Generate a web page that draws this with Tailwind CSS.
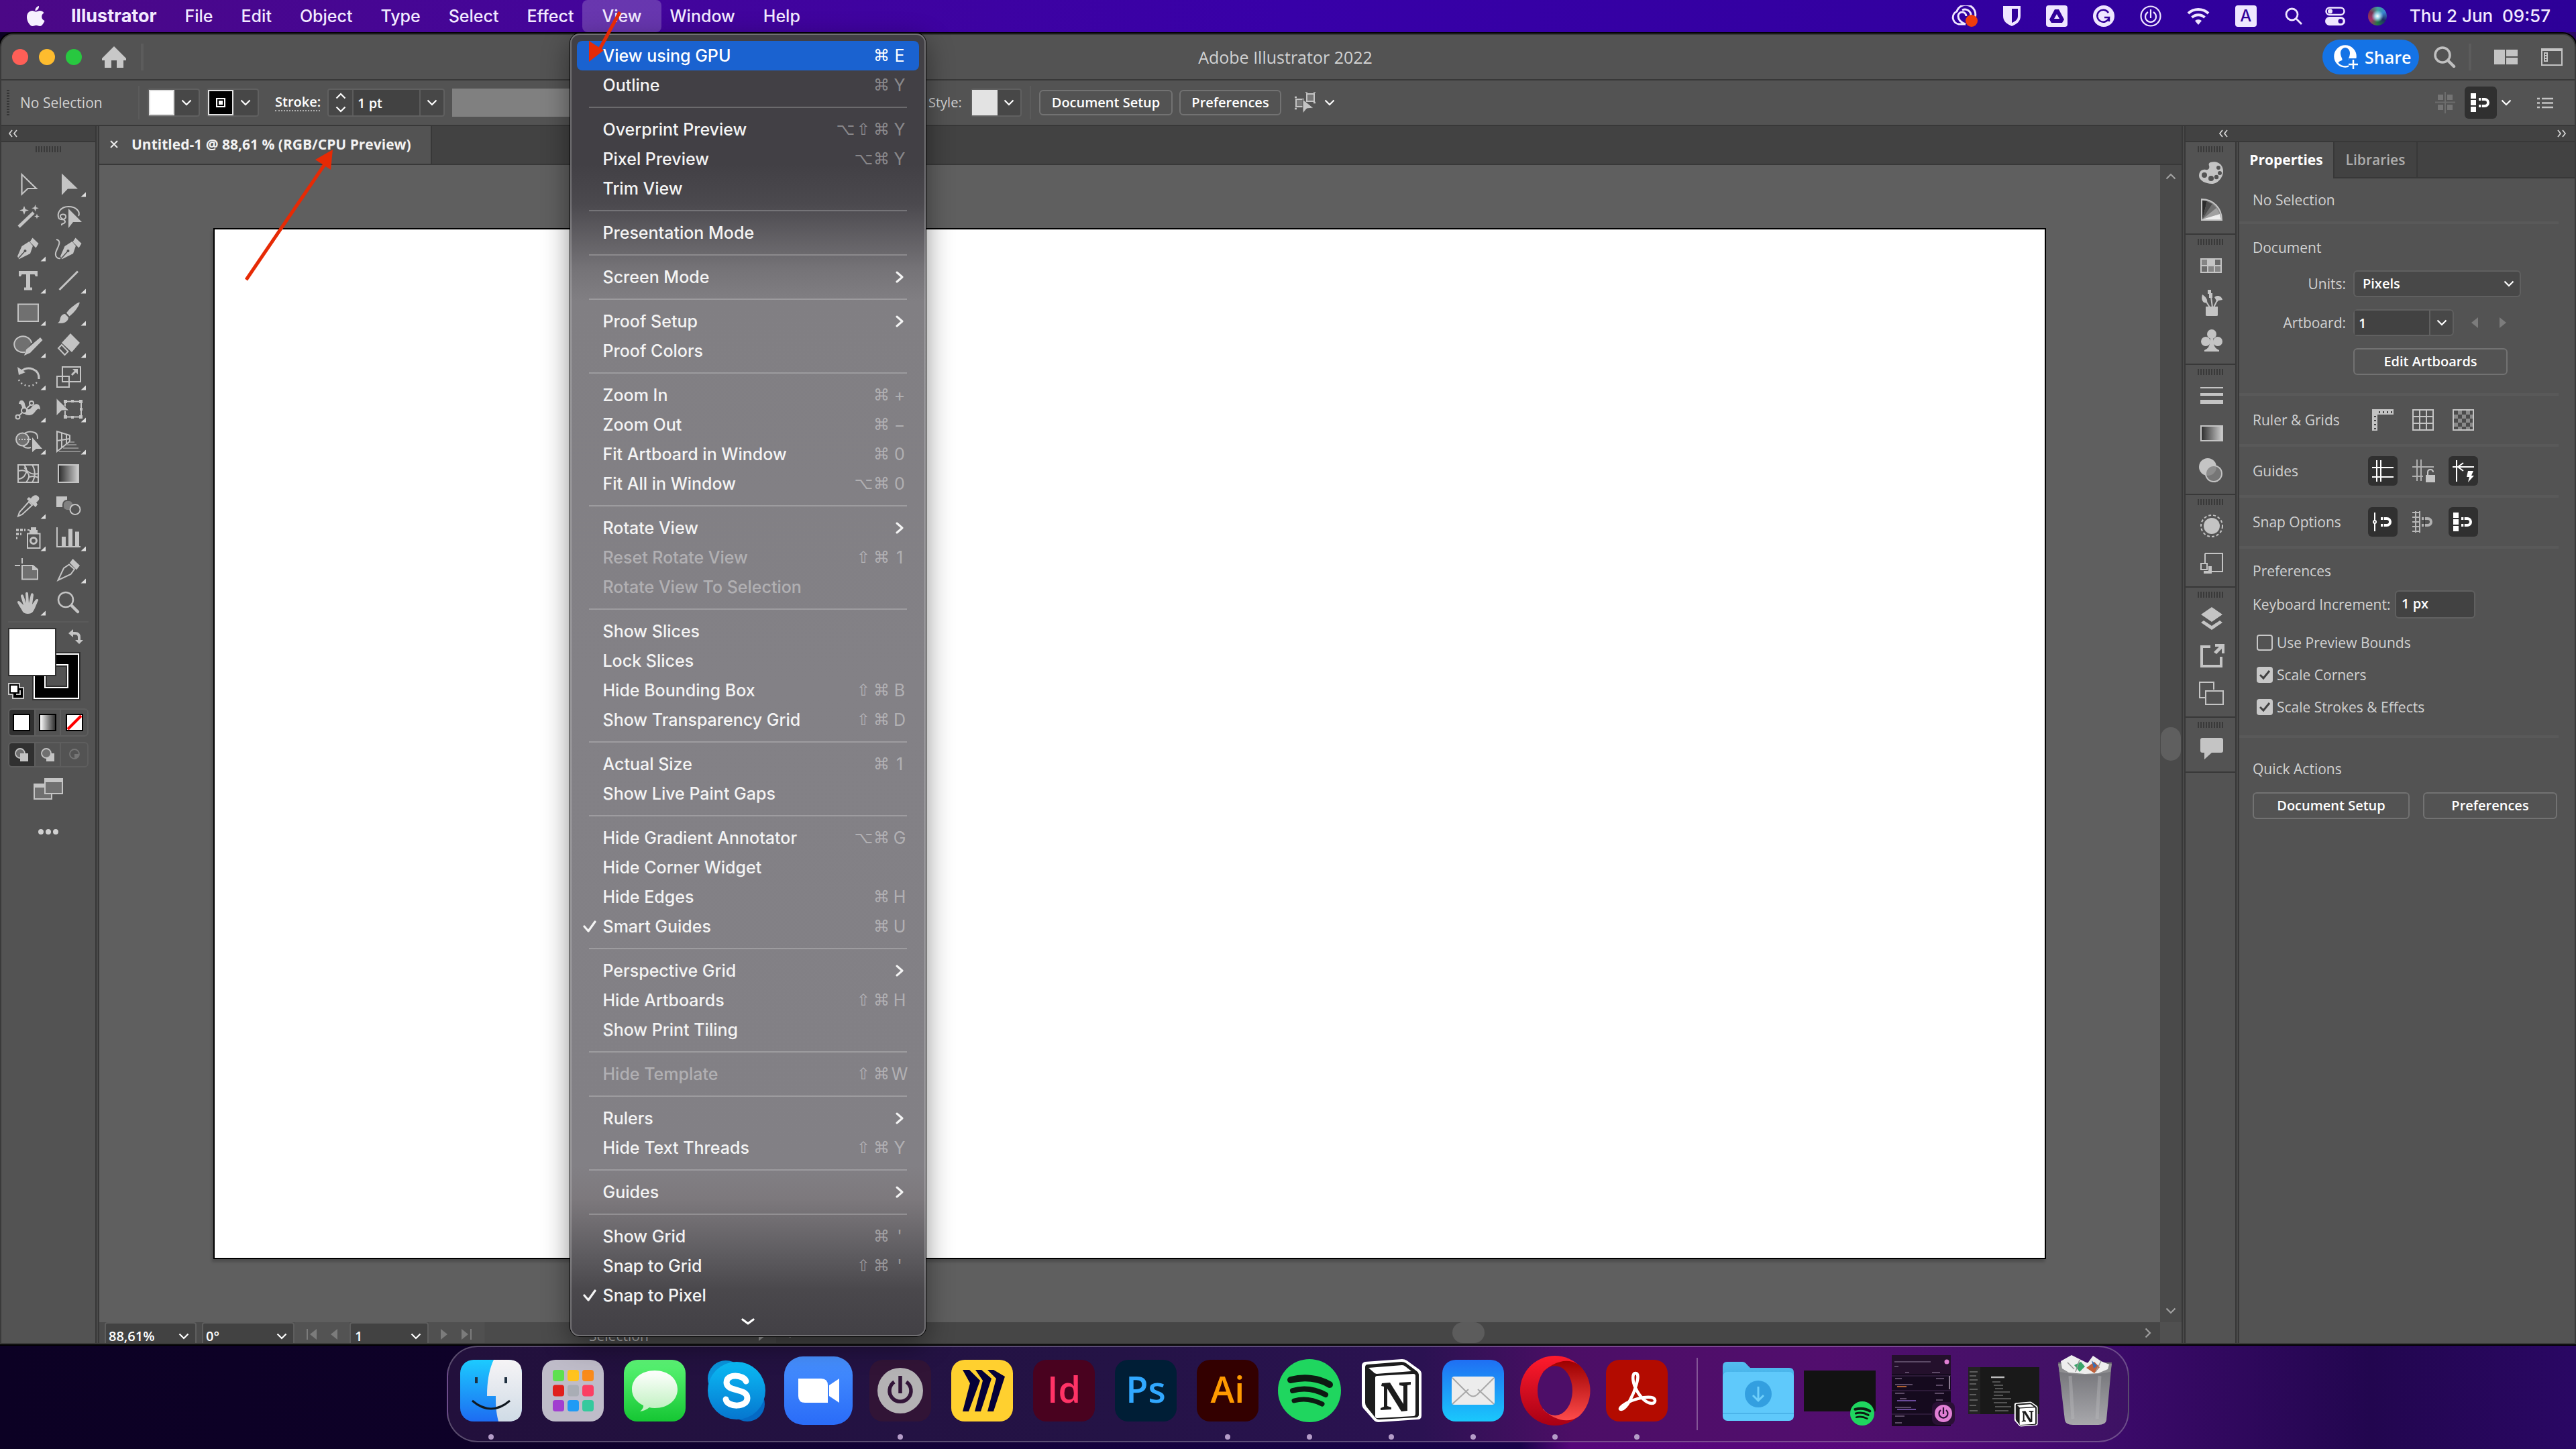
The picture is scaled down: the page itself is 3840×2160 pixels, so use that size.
<!DOCTYPE html>
<html lang="en">
<head>
<meta charset="utf-8">
<title>Adobe Illustrator 2022</title>
<script src="https://cdn.jsdelivr.net/npm/@tailwindcss/browser@4"></script>
</head>
<body class="relative flex min-h-screen flex-col overflow-x-hidden bg-[linear-gradient(90deg,#0c0124_0%,#0e0128_18%,#14023a_38%,#19034a_59%,#56067a_61%,#58087c_74%,#3c0a6a_82%,#22064f_92%,#2a0764_100%)] font-['Open_Sans','Noto_Sans',sans-serif] text-[20px] leading-7 font-medium text-[#d2d2d2]">

<svg class="hidden" aria-hidden="true">
  <symbol id="chev" viewBox="0 0 16 10"><path d="M1.500 1.500 8 8l6.500-6.500" fill="none" stroke="currentColor" stroke-width="2.200"/></symbol>
  <symbol id="grip" viewBox="0 0 38 9"><path d="M1 0v9M5 0v9M9 0v9M13 0v9M17 0v9M21 0v9M25 0v9M29 0v9M33 0v9M37 0v9" stroke="#393939" stroke-width="2"/></symbol>
  <symbol id="dbl" viewBox="0 0 14 12"><path d="M6 1 2 6l4 5M13 1 9 6l4 5" fill="none" stroke="currentColor" stroke-width="1.800"/></symbol>
  <symbol id="magnet" viewBox="0 0 18 16"><path d="M0 3h9a5 5 0 0 1 0 10H0" fill="none" stroke="currentColor" stroke-width="4"/><path d="M4 0v16" stroke="#303030" stroke-width="1.500"/></symbol>
  <symbol id="spot" viewBox="0 0 94 94"><circle cx="47" cy="47" r="47" fill="#1fd65f"/><g fill="none" stroke="#0d1a12" stroke-linecap="round"><path d="M19 31c20-5 42-3 58 7" stroke-width="10"/><path d="M22 47c17-5 34-2 49 6" stroke-width="8"/><path d="M24 62c14-4 28-2 42 5" stroke-width="7"/></g></symbol>
  <symbol id="notion" viewBox="0 0 92 96"><path d="M2 11q0-5 5-6L62 1q4 0 7 2l18 13q4 3 4 7v62q0 6-6 6l-58 4q-5 0-8-4L4 74q-2-3-2-7z" fill="#fff"/><path d="M7 13q0-4 4-4l50-4q4 0 7 2l16 12q3 2 3 5v60q0 3-4 4l-55 3q-4 0-6-3L9 72q-2-3-2-6z" fill="#1c1c1c"/><path d="m12 14 50-4q3 0 5 2l9 7-52 4q-3 0-5-3z" fill="#fff"/><path d="M22 29q0-3 3-3l54-3q3 0 3 3v56q0 4-3 4l-54 3q-3 0-3-3z" fill="#fff"/><path d="m32 37 12-1 20 32V41l-6-1v-4l17-1v4l-5 1v38l-9 1-21-34v26l6 2v3l-16 1v-3l5-2V42l-4-1z" fill="#1c1c1c"/></symbol>
</svg>

<!-- system menu bar -->
<header class="relative z-20 flex h-12 items-center bg-[linear-gradient(90deg,#4b0886_0%,#44059a_22%,#3800a8_50%,#2d0098_100%)] pr-[38px] pl-10 font-['Inter',sans-serif] text-[25px] leading-8 font-medium text-[#f2eaff]">
  <svg class="h-8 w-[27px]" viewBox="0 0 27 32" fill="#f6f0ff"><path d="M18 1c.5 3.500-2.500 7-5.500 7C12 4.500 15 1.500 18 1z"/><path d="M13.500 9.500c2 0 3.500-1.500 6-1.500 2.300 0 4.600 1.200 6 3.200-5 3-4 9.800 1 11.800-1.300 3.600-4 8-6.800 8-2.200 0-3-1.300-5.700-1.300S10.500 31 8.500 31C4.500 31 0 23.500 0 17.500S4 8 8 8c2.300 0 4 1.500 5.500 1.500z"/></svg>
  <nav class="ml-[39px] flex items-center gap-[42px]" aria-label="Menu bar">
    <button class="text-[27px] font-bold">Illustrator</button>
    <button>File</button>
    <button>Edit</button>
    <button>Object</button>
    <button>Type</button>
    <button>Select</button>
    <button>Effect</button>
    <div class="relative -mx-[29px]">
      <button class="flex h-12 items-center rounded-lg bg-white/20 px-[29px]" aria-expanded="true">View</button>
      <div id="menu" role="menu" class="absolute top-[50px] -left-[18px] w-[530px] rounded-[14px] border-2 border-white/25 bg-[linear-gradient(180deg,#424045_0%,#424045_10%,#4b494e_13%,#757377_18%,#817f83_20.500%,#838186_50%,#828085_87%,#7d797d_89.500%,#5e5c60_93.800%,#4a484c_96.500%,#424045_100%)] px-2 pt-[9px] pb-[3px] text-[25px] text-[#f4f4f4] shadow-[0_0_0_1px_#000,0_12px_40px_rgba(0,0,0,0.45)]"></div>
    </div>
    <button>Window</button>
    <button>Help</button>
  </nav>
  <div class="ml-auto flex items-center gap-[42px]">
    <div class="flex items-center gap-[38px]">
      <svg class="h-8 w-10" viewBox="0 0 40 32"><g fill="none" stroke="#efe6ff" stroke-width="3"><path d="M22 28H12A10 10 0 0 1 9 9 12 12 0 0 1 36 18"/><path d="M22 28c-8-3-11-8-11-12a6 6 0 0 1 12 0M17 7a9 9 0 0 1 13 9"/></g><circle cx="31" cy="23" r="9" fill="#f03c0c"/></svg>
      <svg class="h-[30px] w-[26px]" viewBox="0 0 26 30"><path d="M0 0h26v15c0 8-6 12-13 15C6 27 0 23 0 15z" fill="#efe6ff"/><path d="M13 4h9v11c0 5-4 8-9 10z" fill="#310099"/></svg>
      <svg class="size-8" viewBox="0 0 32 32"><rect width="32" height="32" rx="4" fill="#efe6ff"/><path d="M13 6h6l8 15-3 5H8l-3-5zM16 13l-4 7h8z" fill="#310099" fill-rule="evenodd"/></svg>
      <svg class="size-8" viewBox="0 0 32 32"><circle cx="16" cy="16" r="16" fill="#efe6ff"/><path d="M23 11a9 9 0 1 0 1 7h-7M24 18v6" fill="none" stroke="#310099" stroke-width="2.500"/></svg>
      <svg class="size-8" viewBox="0 0 32 32" fill="none" stroke="#efe6ff" stroke-width="2.200"><circle cx="16" cy="16" r="14.500"/><path d="M12 10a8 8 0 1 0 8 0M16 6v13"/></svg>
      <svg class="h-7 w-[34px]" viewBox="0 0 34 28" fill="none" stroke="#efe6ff" stroke-width="4"><path d="M2 10a22 22 0 0 1 30 0M7.500 16a14 14 0 0 1 19 0"/><path d="m17 27-5-6a8 8 0 0 1 10 0z" fill="#efe6ff" stroke="none"/></svg>
      <span class="grid size-8 place-items-center rounded bg-[#efe6ff] text-[24px] text-[#310099]">A</span>
    </div>
    <div class="flex items-center gap-[34px]">
      <svg class="h-[26px] w-[26px]" viewBox="0 0 26 26" fill="none" stroke="#efe6ff" stroke-width="2.800"><circle cx="10.500" cy="10.500" r="8.500"/><path d="m17 17 8 8"/></svg>
      <svg class="h-7 w-[30px]" viewBox="0 0 30 28"><rect x="1.500" y="1.500" width="27" height="10.500" rx="5.200" fill="none" stroke="#efe6ff" stroke-width="2.500"/><circle cx="7.500" cy="6.700" r="3.500" fill="#efe6ff"/><rect y="15" width="30" height="13" rx="6.500" fill="#efe6ff"/><circle cx="23" cy="21.500" r="3.500" fill="#310099"/></svg>
      <span class="size-7 rounded-full bg-[radial-gradient(circle_at_50%_50%,#fff_0%,#9fd4e8_18%,transparent_45%),conic-gradient(#3fa39a,#3b82d0,#1c2a66,#274,#a83268,#7a2f50,#3fa39a)]"></span>
      <time class="text-[26px] whitespace-pre">Thu 2 Jun  09:57</time>
    </div>
  </div>
</header>

<!-- application window -->
<main class="relative mt-0.5 flex flex-1 flex-col overflow-hidden rounded-t-[20px] border-2 border-[#3a3a3a] bg-[#535353] shadow-[0_0_0_2px_#000]">
  <div class="relative flex h-[68px] shrink-0 items-center justify-between border-b-2 border-[#383838] pr-[18px] pl-4">
    <div class="flex items-center">
      <div class="flex gap-4">
        <button aria-label="Close" class="size-6 rounded-full bg-[#ff5f57]"></button>
        <button aria-label="Minimise" class="size-6 rounded-full bg-[#febc2e]"></button>
        <button aria-label="Zoom window" class="size-6 rounded-full bg-[#28c840]"></button>
      </div>
      <button aria-label="Home" class="ml-[30px]"><svg class="h-8 w-9" viewBox="0 0 36 32" fill="#c8c8c8"><path d="M18 0 36 18v3h-4v11H22V21h-8v11H4V21H0v-3z"/></svg></button>
      <span class="ml-[22px] h-10 w-1 bg-[#5c5c5c]"></span>
    </div>
    <h1 class="pointer-events-none absolute inset-x-0 pr-2 text-center text-[25px] leading-8 font-medium">Adobe Illustrator 2022</h1>
    <div class="flex items-center">
      <button class="flex h-[52px] w-36 items-center gap-2.5 rounded-full bg-[#1473e6] pl-[17px] text-[25px] font-semibold text-white"><svg class="size-9" viewBox="0 0 36 36"><circle cx="17" cy="17" r="15.500" fill="none" stroke="#fff" stroke-width="2.500"/><path d="M17 2a15 15 0 0 0-11 26c1-4 4-4 6-5 2-2-2-5-2-11 0-4 3-8 7-8s7 4 7 8c0 6-3 8-2 11l3 1 7-5A15 15 0 0 0 17 2z" fill="#fff"/><path d="M22 20h14v16H22z" fill="#1473e6"/><path d="M29 22v14M22 29h14" stroke="#fff" stroke-width="2.500"/></svg>Share</button>
      <button aria-label="Search" class="ml-[21px]"><svg class="h-8 w-[34px]" viewBox="0 0 34 32" fill="none" stroke="#c0c0c0"><circle cx="14" cy="13" r="11" stroke-width="3.500"/><path d="m22 21 9 9" stroke-width="4.500" stroke-linecap="round"/></svg></button>
      <span class="ml-[19px] h-10 w-1 bg-[#5c5c5c]"></span>
      <button aria-label="Arrange documents" class="ml-[34px]"><svg class="h-[22px] w-[35px]" viewBox="0 0 35 22" fill="#c4c4c4"><path d="M0 0h16v22H0zM18 0h17v10H18zM18 12h17v10H18z"/></svg></button>
      <button aria-label="Switch workspace" class="ml-[35px]"><svg class="h-[26px] w-8" viewBox="0 0 32 26"><path d="M1 1h30v24H1z" fill="none" stroke="#c4c4c4" stroke-width="2"/><path d="M0 0h32v4H0z" fill="#c4c4c4"/><path d="M4 6h6v14H4z" fill="#c4c4c4"/><path d="M6 9h2M6 13h2M6 17h2" stroke="#444" stroke-width="2"/></svg></button>
    </div>
  </div>

  <!-- control bar -->
  <div class="flex h-[68px] shrink-0 items-center border-b-2 border-[#383838] pr-8 pl-2">
    <svg class="h-[38px] w-1" viewBox="0 0 4 38"><path d="M2 0v38" stroke="#353535" stroke-width="4" stroke-dasharray="2 2"/></svg>
    <span class="ml-4 w-[176px] text-[21px]">No Selection</span>
    <span class="h-[50px] w-0.5 bg-[#5b5b5b]"></span>
    <button aria-label="Fill" class="ml-3 flex h-[42px] w-[78px] items-center rounded border-2 border-[#606060] bg-[#474747] text-white"><span class="h-full w-[38px] border-2 border-[#e0e0e0] bg-white"></span><svg class="mx-auto h-2.5 w-4"><use href="#chev"/></svg></button>
    <button aria-label="Stroke colour" class="ml-2.5 flex h-[42px] w-[78px] items-center rounded border-2 border-[#606060] bg-[#474747] text-white"><span class="grid h-full w-[38px] place-items-center border-2 border-[#e0e0e0] bg-black"><span class="grid size-3.5 place-items-center border-2 border-white"><span class="size-1.5 bg-white"></span></span></span><svg class="mx-auto h-2.5 w-4"><use href="#chev"/></svg></button>
    <label for="stroke" class="ml-6 w-[67px] border-b-2 border-dotted border-[#b0b0b0] leading-6 font-semibold text-white">Stroke:</label>
    <div class="ml-[11px] flex h-[42px] w-[175px] items-center rounded border-2 border-[#606060] bg-[#474747] text-white">
      <div class="flex w-[35px] flex-col items-center gap-2.5"><svg class="h-2.5 w-4 rotate-180"><use href="#chev"/></svg><svg class="h-2.5 w-4"><use href="#chev"/></svg></div>
      <input id="stroke" value="1 pt" class="h-full w-[102px] border-x-2 border-[#5c5c5c] bg-[#424242] px-1.5 font-semibold">
      <svg class="mx-auto h-2.5 w-4"><use href="#chev"/></svg>
    </div>
    <span class="ml-[11px] h-[42px] w-[700px] bg-[#808080]"></span>
    <span class="ml-2.5 w-[51px]">Style:</span>
    <button aria-label="Graphic style" class="ml-3 flex h-[42px] w-[76px] items-center rounded border-2 border-[#606060] bg-[#474747] text-white"><span class="h-full w-[38px] bg-[#e3e3e3]"></span><svg class="mx-auto h-2.5 w-4"><use href="#chev"/></svg></button>
    <span class="ml-3 h-[50px] w-0.5 bg-[#5b5b5b]"></span>
    <button class="ml-3 h-[38px] w-[199px] rounded-md border-2 border-[#727272] font-semibold text-white">Document Setup</button>
    <button class="ml-2.5 h-[38px] w-[152px] rounded-md border-2 border-[#727272] font-semibold text-white">Preferences</button>
    <button aria-label="Select similar" class="ml-5 flex items-center gap-3"><svg class="size-8" viewBox="0 0 32 32"><path d="M2 11h11v11H2zM18 3h11v11H18z" fill="#777" stroke="#c4c4c4" stroke-width="2"/><path d="M0 8h3M0 25h3M16 0h3M28 0h3M28 16h3" stroke="#c4c4c4" stroke-width="2.500"/><path d="m12 11 16 13-10 1-6 7z" fill="#c4c4c4" stroke="#535353"/></svg><svg class="h-2.5 w-4 text-white"><use href="#chev"/></svg></button>
    <div class="ml-auto flex items-center">
      <svg class="h-8 w-[30px]" viewBox="0 0 30 32"><path d="M4 4h8v8H4zM18 4h8v8h-8zM4 19h8v8H4zM18 19h8v8h-8z" fill="#747474"/><path d="M15 0v32M0 15.500h30" stroke="#6c6c6c" stroke-width="2"/></svg>
      <button aria-label="Snap to pixel" class="ml-3.5 flex size-12 items-center justify-center gap-1 rounded-md bg-[#303030] text-white"><svg class="h-7 w-2" viewBox="0 0 8 28" fill="#fff"><path d="M0 0h8v8H0zM0 10h8v8H0zM0 20h8v8H0z"/></svg><svg class="h-4 w-[18px]"><use href="#magnet"/></svg></button>
      <svg class="ml-1.5 h-2.5 w-4 text-white"><use href="#chev"/></svg>
      <svg class="ml-[38px] h-[17px] w-6" viewBox="0 0 24 17"><path d="M0 2h4M7 2h17M0 8.500h4M7 8.500h17M0 15h4M7 15h17" stroke="#c4c4c4" stroke-width="2.500"/></svg>
    </div>
  </div>

  <div class="flex min-h-0 flex-1">
    <!-- tools -->
    <aside class="w-[140px] shrink-0">
      <div class="flex h-6 items-center border-b-2 border-[#383838] bg-[#424242] pl-2.5"><svg class="h-3 w-3.5"><use href="#dbl"/></svg></div>
      <svg class="mx-auto mt-1.5 h-[9px] w-[38px]"><use href="#grip"/></svg>
      <div id="tools" class="mt-[23px] grid grid-cols-[60px_60px] justify-center"></div>
      <div class="mx-2.5 mt-1 border-b-2 border-[#5a5a5a]"></div>
      <svg class="mx-2.5 mt-2 h-[108px] w-[120px]" viewBox="0 0 120 108">
        <path d="M36 36h72v72H36z" fill="#303030"/><path d="M38 38h68v68H38z" fill="#fff"/><path d="M40 40h64v64H40z" fill="#000"/><path d="M54 54h36v36H54z" fill="#fff"/><path d="M56 56h32v32H56z" fill="#303030"/><path d="M58 58h28v28H58z" fill="#535353"/>
        <path d="M0 0h72v72H0z" fill="#303030"/><path d="M2 2h68v68H2z" fill="#fff"/>
        <path d="M94 8h6q6 0 6 6v5" fill="none" stroke="#c4c4c4" stroke-width="4"/><path d="m90 8 7-6v12zM106 24l-6-6h12z" fill="#c4c4c4"/>
        <path d="M0 82h18v6h6v18H6v-6H0z" fill="#c4c4c4"/><path d="M8 90h14v14H8z"/><path d="M2 84h14v14H2z"/><path d="M4 86h10v10H4z" fill="#fff"/><path d="M12 99h6v-6" fill="none" stroke="#c4c4c4" stroke-width="2"/>
      </svg>
      <div class="mx-2.5 mt-3 grid h-[42px] w-[120px] grid-cols-3 divide-x-2 divide-[#5e5e5e] overflow-hidden rounded-md border-2 border-[#5e5e5e]">
        <button aria-label="Color" class="grid place-items-center bg-[#303030]"><span class="size-[26px] border-2 border-black bg-white"></span></button>
        <button aria-label="Gradient fill" class="grid place-items-center"><span class="size-[26px] border-2 border-black bg-linear-to-r from-white to-[#333]"></span></button>
        <button aria-label="None" class="grid place-items-center"><svg class="size-[26px]" viewBox="0 0 26 26"><path d="M1 1h24v24H1z" fill="#fff" stroke="#000" stroke-width="2"/><path d="M3 23 23 3" stroke="#f00" stroke-width="4"/></svg></button>
      </div>
      <div class="mx-2.5 mt-2 grid h-[38px] w-[120px] grid-cols-3 divide-x-2 divide-[#5e5e5e] overflow-hidden rounded-md border-2 border-[#5e5e5e]">
        <button aria-label="Draw normal" class="grid place-items-center bg-[#303030]"><svg class="size-5" viewBox="0 0 20 20"><circle cx="8" cy="8" r="7" fill="#707070" stroke="#c4c4c4" stroke-width="1.800"/><path d="M8 8h12v12H8z" fill="#c4c4c4"/></svg></button>
        <button aria-label="Draw behind" class="grid place-items-center"><svg class="size-5" viewBox="0 0 20 20"><path d="M8 8h12v12H8z" fill="#c4c4c4"/><circle cx="8" cy="8" r="7" fill="#707070" stroke="#c4c4c4" stroke-width="1.800"/></svg></button>
        <button aria-label="Draw inside" class="grid place-items-center"><svg class="size-5" viewBox="0 0 20 20"><circle cx="10" cy="9" r="7" fill="none" stroke="#757575" stroke-width="1.800"/><path d="M10 9h7q0 7-7 7z" fill="#757575"/></svg></button>
      </div>
      <button aria-label="Change screen mode" class="mx-auto mt-4 block w-11"><svg class="h-8 w-11" viewBox="0 0 44 32"><path d="M1 9h26v22H1z" fill="#707070" stroke="#c4c4c4" stroke-width="2"/><path d="M0 8h28v6H0z" fill="#c4c4c4"/><path d="M17 1h26v22H17z" fill="#707070" stroke="#c4c4c4" stroke-width="2"/><path d="M16 0h28v6H16z" fill="#c4c4c4"/></svg></button>
      <button aria-label="Edit toolbar" class="mx-auto mt-11 block w-[30px]"><svg class="h-2 w-[30px]" viewBox="0 0 30 8" fill="#d0d0d0"><circle cx="4" cy="4" r="4"/><circle cx="15" cy="4" r="4"/><circle cx="26" cy="4" r="4"/></svg></button>
    </aside>
    <div class="w-1.5 shrink-0 border-x-2 border-[#383838] bg-[#4a4a4a]"></div>

    <!-- document -->
    <section class="flex min-w-0 flex-1 flex-col">
      <div class="flex h-[58px] shrink-0 border-b-2 border-[#383838] bg-[#424242]">
        <div class="flex w-[496px] items-center gap-5 border-r-2 border-[#383838] bg-[#535353] pb-0.5 pl-4 text-[21px] font-bold text-[#f2f2f2]"><button aria-label="Close tab"><svg class="size-3" viewBox="0 0 12 12"><path d="m1 1 10 10M11 1 1 11" stroke="#eee" stroke-width="2"/></svg></button><span class="whitespace-nowrap">Untitled-1 @ 88,61 % (RGB/CPU Preview)</span></div>
      </div>
      <div class="flex min-h-0 flex-1">
        <div class="flex flex-1 bg-[#5f5f5f] px-[170px] py-[94px]"><div class="flex-1 border-2 border-black bg-white shadow-[-2px_4px_4px_rgba(0,0,0,0.2)]"></div></div>
        <div class="flex w-8 flex-col items-center justify-between bg-[#4a4a4a] py-3 text-[#a0a0a0]"><svg class="h-2.5 w-4 rotate-180"><use href="#chev"/></svg><span class="h-[50px] w-[30px] rounded-2xl bg-[#5f5f5f]"></span><svg class="h-2.5 w-4"><use href="#chev"/></svg></div>
      </div>
      <div class="flex h-[31px] shrink-0 overflow-hidden bg-[#4b4b4b] pl-2 font-semibold text-white">
        <div class="flex w-[137px] items-center rounded-t border-2 border-b-0 border-[#5e5e5e] bg-[#424242] pt-2"><input aria-label="Zoom level" value="88,61%" class="w-[99px] pl-1"><svg class="mx-auto h-2.5 w-4"><use href="#chev"/></svg></div>
        <div class="ml-2 flex w-[138px] items-center rounded-t border-2 border-b-0 border-[#5e5e5e] bg-[#424242] pt-2"><input aria-label="Rotate view" value="0°" class="w-[100px] pl-1"><svg class="mx-auto h-2.5 w-4"><use href="#chev"/></svg></div>
        <div class="flex w-[82px] items-center justify-center gap-5 bg-[#535353] pt-1"><svg class="h-4 w-4" viewBox="0 0 16 16" fill="#7c7c7c"><path d="M0 0h2v16H0zM15 0v16L5 8z"/></svg><svg class="h-4 w-2.5" viewBox="0 0 10 16" fill="#7c7c7c"><path d="M10 0v16L0 8z"/></svg></div>
        <div class="flex w-[118px] items-center rounded-t border-2 border-b-0 border-[#5e5e5e] bg-[#424242] pt-2"><input aria-label="Artboard number" value="1" class="w-20 pl-1.5"><svg class="mx-auto h-2.5 w-4"><use href="#chev"/></svg></div>
        <div class="flex w-[82px] items-center justify-center gap-5 bg-[#505050] pt-1"><svg class="h-4 w-2.5" viewBox="0 0 10 16" fill="#7c7c7c"><path d="M0 0v16l10-8z"/></svg><svg class="h-4 w-4" viewBox="0 0 16 16" fill="#7c7c7c"><path d="M14 0h2v16h-2zM1 0v16l10-8z"/></svg></div>
        <div class="flex w-[436px] items-center justify-between border-l-2 border-[#4e4e4e] pt-2 pr-4 pl-[155px] text-[21px] font-medium text-[#b8b8b8]">Selection<svg class="h-4 w-2.5" viewBox="0 0 10 16" fill="#a0a0a0"><path d="M0 0v16l10-8z"/></svg></div>
        <div class="flex flex-1 items-center justify-between bg-[#464646] px-2.5 text-[#a0a0a0]"><svg class="h-2.5 w-4 rotate-90"><use href="#chev"/></svg><span class="h-[31px] w-12 rounded-2xl bg-[#5c5c5c]"></span><svg class="h-2.5 w-4 -rotate-90"><use href="#chev"/></svg></div>
        <div class="w-8 bg-[#505050]"></div>
      </div>
    </section>
    <div class="w-1.5 shrink-0 border-x-2 border-[#383838] bg-[#4a4a4a]"></div>

    <!-- panels -->
    <aside class="flex shrink-0 flex-col">
      <div class="flex h-6 items-center justify-between border-b-2 border-[#383838] bg-[#424242] pr-3 pl-[49px]"><svg class="h-3 w-3.5"><use href="#dbl"/></svg><svg class="h-3 w-3.5 rotate-180"><use href="#dbl"/></svg></div>
      <div class="flex flex-1">
        <div id="strip" class="w-[74px]"></div>
        <div class="w-1.5 border-x-2 border-[#383838] bg-[#4a4a4a]"></div>
        <div class="w-[500px] text-[21px]">
          <div class="flex h-[54px] font-bold">
            <button class="w-[140px] pb-0.5 text-white">Properties</button>
            <button class="w-[126px] border-x-2 border-b-2 border-[#383838] bg-[#424242] font-semibold text-[#adadad]">Libraries</button>
            <div class="flex-1 border-b-2 border-[#383838] bg-[#424242]"></div>
          </div>
          <div class="mr-6 flex h-[68px] items-center border-b-4 border-[#595959] pl-5">No Selection</div>
          <div class="mr-6 border-b-4 border-[#595959] pt-[21px] pb-[27px]">
            <h2 class="pl-5">Document</h2>
            <div class="mt-5 grid auto-rows-[40px] grid-cols-[159px_1fr] items-center gap-x-[11px] gap-y-[18px]">
              <label for="units" class="text-right">Units:</label>
              <div class="relative w-[250px]"><select id="units" class="h-10 w-full appearance-none rounded-md border-2 border-[#606060] bg-[#484848] pl-3 text-[20px] font-semibold text-white"><option>Pixels</option></select><svg class="pointer-events-none absolute top-[15px] right-2.5 h-2.5 w-4 text-white"><use href="#chev"/></svg></div>
              <label for="artboard" class="text-right">Artboard:</label>
              <div class="flex items-center">
                <div class="flex h-10 w-[150px] items-center rounded-md border-2 border-[#606060] bg-[#484848] text-white"><input id="artboard" value="1" class="h-full w-[113px] border-r-2 border-[#606060] bg-[#424242] pl-1.5 text-[20px] font-semibold"><svg class="mx-auto h-2.5 w-4"><use href="#chev"/></svg></div>
                <button aria-label="Previous artboard" class="ml-[26px]"><svg class="h-4 w-2.5" viewBox="0 0 10 16" fill="#7c7c7c"><path d="M10 0v16L0 8z"/></svg></button>
                <button aria-label="Next artboard" class="ml-8"><svg class="h-4 w-2.5" viewBox="0 0 10 16" fill="#7c7c7c"><path d="M0 0v16l10-8z"/></svg></button>
              </div>
              <button class="col-start-2 h-10 w-[230px] rounded-md border-2 border-[#727272] text-[20px] font-semibold text-white">Edit Artboards</button>
            </div>
          </div>
          <div class="mr-6 flex h-[76px] items-center border-b-4 border-[#595959] pl-5"><span class="w-[172px]">Ruler &amp; Grids</span>
            <div class="flex gap-4">
              <button aria-label="Show rulers" class="grid size-11 place-items-center"><svg class="size-8" viewBox="0 0 32 32"><path d="M0 0h32v8H8v24H0z" fill="#c4c4c4"/><path d="M10 4.500h20M4.500 10v20" stroke="#444" stroke-width="3" stroke-dasharray="2 4"/></svg></button>
              <button aria-label="Show grid" class="grid size-11 place-items-center"><svg class="size-8" viewBox="0 0 32 32"><path d="M1 1h30v30H1zM11 1v30M21 1v30M1 11h30M1 21h30" fill="none" stroke="#c4c4c4" stroke-width="2"/></svg></button>
              <button aria-label="Show transparency grid" class="grid size-11 place-items-center"><svg class="size-8" viewBox="0 0 32 32"><path d="M1 1h30v30H1z" fill="#4c4c4c" stroke="#c4c4c4" stroke-width="2"/><path d="M8 2h6v6H8zM20 2h6v6h-6zM2 8h6v6H2zM14 8h6v6h-6zM26 8h4v6h-4zM8 14h6v6H8zM20 14h6v6h-6zM2 20h6v6H2zM14 20h6v6h-6zM26 20h4v6h-4zM8 26h6v4H8zM20 26h6v4h-6z" fill="#8a8a8a"/></svg></button>
            </div>
          </div>
          <div class="mr-6 flex h-[76px] items-center border-b-4 border-[#595959] pl-5"><span class="w-[172px]">Guides</span>
            <div class="flex gap-4">
              <button aria-label="Show guides" class="grid size-11 place-items-center rounded-md bg-[#303030]"><svg class="size-8" viewBox="0 0 32 32"><path d="M7 0v32M13 0v32M0 11h32M0 25h32" stroke="#fff" stroke-width="2"/></svg></button>
              <button aria-label="Lock guides" class="grid size-11 place-items-center"><svg class="size-9" viewBox="0 0 36 36"><path d="M9 1v32M15 1v32M2 12h32M2 26h16" stroke="#b0b0b0" stroke-width="2"/><path d="M22 24h14v11H22z" fill="#c4c4c4"/><path d="M25 24v-4q0-4 4-4t4 4" fill="none" stroke="#c4c4c4" stroke-width="2"/></svg></button>
              <button aria-label="Smart guides" class="grid size-11 place-items-center rounded-md bg-[#303030]"><svg class="size-9" viewBox="0 0 36 36"><path d="M8 2v32M2 12h32M18 6l-8 6 8 6" fill="none" stroke="#fff" stroke-width="2"/><path d="M25 18h8l-3 7h4L25 35l2-8h-4z" fill="#fff"/></svg></button>
            </div>
          </div>
          <div class="mr-6 flex h-[76px] items-center border-b-4 border-[#595959] pl-5"><span class="w-[172px]">Snap Options</span>
            <div class="flex gap-4 text-white">
              <button aria-label="Snap to point" class="flex size-11 items-center justify-center gap-1.5 rounded-md bg-[#303030]"><svg class="h-7 w-1.5" viewBox="0 0 6 28"><path d="M3 0v28" stroke="#fff" stroke-width="2"/><circle cx="3" cy="14" r="2" fill="#303030" stroke="#fff" stroke-width="2"/></svg><svg class="h-4 w-[18px]"><use href="#magnet"/></svg></button>
              <button aria-label="Snap to grid" class="flex size-11 items-center justify-center gap-0.5 text-[#b0b0b0]"><svg class="h-8 w-3" viewBox="0 0 12 32"><path d="M0 2h12M0 9h12M0 16h12M0 23h12M0 30h12M5 0v32M11 0v32" stroke="#b8b8b8" stroke-width="2"/></svg><svg class="h-4 w-[18px]"><use href="#magnet"/></svg></button>
              <button aria-label="Snap to pixel grid" class="flex size-11 items-center justify-center gap-1 rounded-md bg-[#303030]"><svg class="h-7 w-2" viewBox="0 0 8 28" fill="#fff"><path d="M0 0h8v8H0zM0 10h8v8H0zM0 20h8v8H0z"/></svg><svg class="h-4 w-[18px]"><use href="#magnet"/></svg></button>
            </div>
          </div>
          <div class="mr-6 border-b-4 border-[#595959] pt-[19px] pb-[18px] pl-5">
            <h2>Preferences</h2>
            <div class="mt-[15px] flex h-[42px] items-center"><label for="inc" class="w-[212px]">Keyboard Increment:</label><input id="inc" value="1 px" class="h-[42px] w-[120px] rounded-md border-2 border-[#606060] bg-[#424242] pb-1 pl-2 text-[20px] font-semibold text-white"></div>
            <div class="mt-3 pl-1.5">
              <label class="flex h-12 items-center gap-1.5"><input type="checkbox" class="size-6 appearance-none rounded border-2 border-[#c8c8c8]">Use Preview Bounds</label>
              <label class="relative flex h-12 items-center gap-1.5"><input type="checkbox" checked class="size-6 appearance-none rounded bg-[#c8c8c8]">Scale Corners<svg class="pointer-events-none absolute left-1 size-4" viewBox="0 0 16 16"><path d="m1 8 5 5 9-11" fill="none" stroke="#424242" stroke-width="3"/></svg></label>
              <label class="relative flex h-12 items-center gap-1.5"><input type="checkbox" checked class="size-6 appearance-none rounded bg-[#c8c8c8]">Scale Strokes &amp; Effects<svg class="pointer-events-none absolute left-1 size-4" viewBox="0 0 16 16"><path d="m1 8 5 5 9-11" fill="none" stroke="#424242" stroke-width="3"/></svg></label>
            </div>
          </div>
          <div class="pt-8 pl-5">
            <h2>Quick Actions</h2>
            <div class="mt-[21px] flex gap-5 text-[20px] font-semibold text-white">
              <button class="h-10 w-[234px] rounded-md border-2 border-[#727272]">Document Setup</button>
              <button class="h-10 w-[200px] rounded-md border-2 border-[#727272]">Preferences</button>
            </div>
          </div>
        </div>
      </div>
    </aside>
  </div>
</main>

<!-- dock -->
<nav id="dock" aria-label="Dock" class="relative mx-auto mt-0.5 mb-2.5 flex h-36 rounded-[46px] border-2 border-white/25 bg-[linear-gradient(90deg,#22103c_0%,#241346_40%,#2b1252_58%,#4c0e66_67%,#520e6e_82%,#3d1264_100%)] px-[3px]"></nav>

<!-- annotation arrows -->
<svg class="pointer-events-none absolute top-0 left-0 z-30 h-[430px] w-[940px]" viewBox="0 0 940 430" aria-hidden="true"><g stroke="#e62a05" stroke-width="5"><path d="m367 417 117-172M924 18l-30 55"/></g><g fill="#e62a05"><path d="m496 223-26 15 23 15zM878 92V61l22 14z"/></g></svg>

<script>
const menuRows = [
  ['View using GPU', '⌘E', 'hi'], ['Outline', '⌘Y'], 0,
  ['Overprint Preview', '⌥⇧⌘Y'], ['Pixel Preview', '⌥⌘Y'], ['Trim View', ''], 0,
  ['Presentation Mode', ''], 0, ['Screen Mode', '>'], 0,
  ['Proof Setup', '>'], ['Proof Colors', ''], 0,
  ['Zoom In', '⌘+'], ['Zoom Out', '⌘−'], ['Fit Artboard in Window', '⌘0'], ['Fit All in Window', '⌥⌘0'], 0,
  ['Rotate View', '>'], ['Reset Rotate View', '⇧⌘1', 'off'], ['Rotate View To Selection', '', 'off'], 0,
  ['Show Slices', ''], ['Lock Slices', ''], ['Hide Bounding Box', '⇧⌘B'], ['Show Transparency Grid', '⇧⌘D'], 0,
  ['Actual Size', '⌘1'], ['Show Live Paint Gaps', ''], 0,
  ['Hide Gradient Annotator', '⌥⌘G'], ['Hide Corner Widget', ''], ['Hide Edges', '⌘H'], ['Smart Guides', '⌘U', 'on'], 0,
  ['Perspective Grid', '>'], ['Hide Artboards', '⇧⌘H'], ['Show Print Tiling', ''], 0,
  ['Hide Template', '⇧⌘W', 'off'], 0, ['Rulers', '>'], ['Hide Text Threads', '⇧⌘Y'], 0,
  ['Guides', '>'], 0, ['Show Grid', "⌘'"], ['Snap to Grid', "⇧⌘'"], ['Snap to Pixel', '', 'on'],
];
const tick = '<svg class="h-[18px] w-5" viewBox="0 0 20 18"><path d="m2 9 6 7L18 2" fill="none" stroke="#f4f4f4" stroke-width="3.200" stroke-linecap="round" stroke-linejoin="round"/></svg>';
const arrow = '<span class="grid w-[27px] place-items-center"><svg class="h-[18px] w-3" viewBox="0 0 12 18"><path d="m2 2 8 7-8 7" fill="none" stroke="#f4f4f4" stroke-width="3" stroke-linecap="round" stroke-linejoin="round"/></svg></span>';
document.getElementById('menu').innerHTML = menuRows.map(r => {
  if (!r) return '<hr class="mx-[18px] my-2.5 h-0.5 border-0 bg-white/22">';
  const [name, keys, state] = r;
  const row = state === 'hi' ? 'flex h-11 w-full items-center rounded-lg bg-[#1a62d0] pr-4 text-left text-white'
    : state === 'off' ? 'flex h-11 w-full items-center pr-4 text-left text-white/40' : 'flex h-11 w-full items-center pr-4 text-left';
  const keyColor = state === 'hi' ? 'flex text-white' : "flex text-white/40";
  const right = keys === '>' ? arrow : [...keys].map(k => '⌘⇧⌥'.includes(k)
    ? `<span class="w-[27px] text-center font-['DejaVu_Sans',sans-serif] text-[24px] font-normal">${k}</span>`
    : `<span class="w-[27px] text-center font-normal">${k}</span>`).join('');
  return `<button role="menuitem" class="${row}"><span class="flex w-[38px] justify-center">${state === 'on' ? tick : ''}</span><span class="flex-1 whitespace-nowrap">${name}</span><span class="${keyColor}">${right}</span></button>`;
}).join('') + '<div class="grid h-[34px] place-items-center"><svg class="h-3 w-5" viewBox="0 0 20 12"><path d="m2 3 8 6 8-6" fill="none" stroke="#fff" stroke-width="3.200" stroke-linecap="round" stroke-linejoin="round"/></svg></div>';

const S = 'fill="none" stroke="#c4c4c4" stroke-width="2"';
const line = w => `fill="none" stroke="#c4c4c4" stroke-width="${w}"`;
const cut = '<path d="M15 39.500 25 28.500" stroke="#535353" stroke-width="1.500"/><circle cx="25.500" cy="28" r="2" fill="#535353"/>';
const nib = '<path d="m14 36 6.500-15 11-7 5.500 6.500L33 32l-17 8.500zM36.500 8.500l9 8.500-4 6.500-9-9z"/>' + cut;
const tools = [
  ['Selection', `<path d="M20.500 10v29.500l9-8.500H42z" ${line(2.2)}/>`, 0],
  ['Direct selection', '<path d="M20 8.500V41l9-9.500h15z"/>', 1],
  ['Magic wand', `<path d="m16 40 22-21" ${line(4.5)}/><path d="m24 9 2 5 5 1.500-5 1.500-2 5-2-5-5-1.500 5-1.500zM40.500 7l1.300 4 4 1.300-4 1.300-1.300 4-1.300-4-4-1.300 4-1.300zM43 20.500l1 3 3 1-3 1-1 3-1-3-3-1 3-1z"/>`, 0],
  ['Lasso', `<path d="M16 28c-4-8 2-18 14-18s18 8 15 14M16 28c5 3 11 0 10-4s-9-3-8 1 8 4 7 8-6 1-5 5" ${S}/><path d="M30 13v29l7-9h13z"/>`, 0],
  ['Pen', nib, 1],
  ['Curvature', `<g transform="translate(4 0)">${nib}</g><path d="M12 11c10 2 0 14-1 20s3 9 7 8" ${S}/>`, 0],
  ['Type', '<path d="M16 10h28v8h-3l-1.500-3H33v19.500h3v4H24v-4h3V15h-6.500L19 18h-3z"/>', 1],
  ['Line segment', `<path d="M16.500 38 44 10.500" ${line(3)}/>`, 1],
  ['Rectangle', '<path d="M15 11.500h30v25.500H15z" fill="#707070" stroke="#c4c4c4" stroke-width="2"/>', 1],
  ['Paintbrush', '<path d="M46.500 8.500c1 4-8 16-15 21l-4.500-5c4-6 15-15 19.500-16zM25 26l5 5c0 6-6 10-16 8.500 4-2 3-7 5-10q2-3.500 6-3.500z"/>', 1],
  ['Shaper', '<path d="M25 35A13 12 0 1 1 35 21" fill="#707070" stroke="#c4c4c4" stroke-width="2"/><path d="m24 40 3-9 21-18 3.500 4L33 36z"/>', 1],
  ['Eraser', `<path d="m33 7 14 14-12 14-15-14z"/><path d="m20 24-5 5 9.500 10 5-5z" ${S}/>`, 1],
  ['Rotate', `<path d="M20 15c10-8 27-3 26 12" ${line(3)}/><path d="m14 9 2 12 10-4z"/><path d="M16 28c4 10 22 14 29 1" ${line(2.5)} stroke-dasharray="2 4"/>`, 1],
  ['Scale', `<path d="M21 9h27v22H21zM13 23h18v16H13z" ${S}/><path d="m35 21 7-7" ${line(3)}/><path d="M36 12h8v8z"/>`, 1],
  ['Width', `<path d="M16 16c1-8 8-6 9 0s5 12 10 5 13-7 13 4c-6-6-7 8-16 8s-10-5-11-11-3-6-5-6z"/><path d="m16 34 18-17" ${S}/><circle cx="14.500" cy="35.500" r="3" ${S}/><circle cx="35" cy="15" r="3" ${S}/><circle cx="24" cy="26" r="4" fill="#535353" stroke="#c4c4c4" stroke-width="2"/>`, 1],
  ['Free transform', `<path d="M25 12.500h24v23H25z" ${S}/><path d="M23 10h5v5h-5zM34 10h4v4h-4zM46 10h5v5h-5zM47 22h4v4h-4zM46 33h5v5h-5zM34 34h4v4h-4zM23 33h5v5h-5z"/><path d="M12 7.500V34l8-8h11z" stroke="#535353"/>`, 1],
  ['Shape builder', `<path d="M34 33C24 36 20 30 20 21s10-14 20-10c4 2 4 5 4 9" ${S}/><circle cx="21.500" cy="21" r="9.500" fill="#707070" stroke="#c4c4c4" stroke-width="2"/><path d="M16 21h22" ${S} stroke-dasharray="2 2"/><path d="M36 18v22l6-5h9z"/>`, 1],
  ['Perspective grid', `<path d="M13 9v30l19-15v-9zM20 11v22M27 13v15M13 23l19-3" ${S}/><path d="M32 25h7M27 29h15M22 34h23M16 39h32" stroke="#8c8c8c" stroke-width="2"/>`, 1],
  ['Mesh', `<path d="M15 11h30v26H15zM15 20c8-2 14 0 16 6 1 5-2 8-4 11M24 11c5 6 4 12 0 17-3 3-7 4-9 4M45 24c-8 2-14 0-21-9M36 11c5 8 5 18 0 26M30 30c5-3 9-3 15 0" ${S}/>`, 0],
  ['Gradient', '<defs><linearGradient id="g1"><stop stop-color="#2a2a2a"/><stop offset="1" stop-color="#cfcfcf"/></linearGradient></defs><path d="M15 11h30v26H15z" fill="url(#g1)" stroke="#c4c4c4" stroke-width="2"/>', 0],
  ['Eyedropper', `<path d="m31 18 5 5-15 14-6 2.500 2-6z" ${S}/><path d="m28 14 3-3 3 2c3-5 8-6 11-3s1 6-3 9l2 3-3 4z"/>`, 1],
  ['Blend', '<path d="M12 10h16v16H12z"/><rect x="22" y="16" width="15" height="15" rx="6" fill="#808080" stroke="#535353" stroke-width="2"/><circle cx="40" cy="29.500" r="7.500" fill="#535353" stroke="#c4c4c4" stroke-width="2"/>', 0],
  ['Symbol sprayer', `<path d="M29 17.500h18.500V39H29z" ${S}/><path d="M34 8h8v4h2v5H32v-5h2z"/><circle cx="38" cy="28" r="4.500" ${line(3)}/><path d="M12 12h14M12 18h8M12 24h2" stroke="#c4c4c4" stroke-width="3.500" stroke-dasharray="4 2"/><path d="M29 12h3" stroke="#c4c4c4" stroke-width="2"/>`, 1],
  ['Column graph', `<path d="M13 8v29h35" ${S}/><path d="M20 22h6v14h-6zM30 10.500h6V36h-6zM40 14.500h6V36h-6z"/>`, 1],
  ['Artboard', '<path d="M21 17h16l7 6v14.500H21z" fill="#707070" stroke="#c4c4c4" stroke-width="2"/><path d="M36 16v8h8zM10 16h8v2h-8zM20 6h2v8h-2z"/>', 0],
  ['Slice', `<path d="m36.500 7 10.500 10-5 6.500L32 13z"/><path d="m14.500 39 8.500-18 8-5.500 8 7-5.500 7.500z" ${S}/>`, 1],
  ['Hand', '<path d="M22 38c-3-6-7-11-8-14-.500-2 2-3 4-1l5 5-4-13c-.500-3 3-4 4-1l4 11-1-14c0-3 4-3 4 0l1 14 3-13c1-3 4-2 4 1l-2 14 5-7c2-2 5-1 4 1-3 6-5 13-8 17-3 4-12 4-15 0z"/>', 1],
  ['Zoom', `<circle cx="26" cy="20" r="11" ${line(2.5)}/><path d="m35 29 9 9" ${line(4.5)} stroke-linecap="round"/>`, 0],
];
document.getElementById('tools').innerHTML = tools.map(([label, art, more]) =>
  `<button aria-label="${label}"><svg class="h-12 w-[60px]" viewBox="0 0 60 48" fill="#c4c4c4">${art}${more ? '<path d="M48.500 43.500H56v-7z" fill="#dcdcdc"/>' : ''}</svg></button>`).join('');

const strip = [
  [['Color', '<path d="M18 4c10-3 19 3 19 13S29 36 20 36 1 31 1 24s5-10 10-9 6-3 5-6 0-4 2-5z"/><g fill="#535353"><circle cx="9" cy="23" r="4"/><circle cx="19" cy="28" r="4"/><circle cx="27" cy="26" r="3.200"/><circle cx="32" cy="20" r="3"/><circle cx="30" cy="12" r="3"/></g>'],
   ['Color guide', '<path d="M5 3c17 0 30 13 30 31H5z" fill="#888"/><path d="M6 33V5l7 1z" fill="#2a2a2a"/><path d="m6 33 7-27 8 4z" fill="#4b4b4b"/><path d="m6 33 15-23 6 6z" fill="#707070"/><path d="m6 33 21-17 5 9z" fill="#a0a0a0"/><path d="m6 33 26-8 2 8z" fill="#eee"/><path d="M5 3c17 0 30 13 30 31H5z" fill="none" stroke="#c4c4c4" stroke-width="2"/>']],
  [['Swatches', '<path d="M3 9h32v22H3z"/><path d="M5 11h8v8H5z" fill="#858585"/><path d="M25 11h8v8h-8zM5 21h8v8H5z" fill="#6a6a6a"/><path d="M15 21h8v8h-8zM25 21h8v8h-8z" fill="#858585"/>'],
   ['Brushes', '<path d="M11 25h18v13q0 1-2 1H13q-2 0-2-1zM14 0h5v5h2v7h-5V6h-2zM6 7c6 4 8 8 7 12-4 2-10-2-7-12zM24 11c4-4 11-2 12 4l-6 1-2 2z"/><path d="m12 18 5 8M19 11l2 15M28 16l-5 10" stroke="#c4c4c4" stroke-width="2"/>'],
   ['Symbols', '<circle cx="20" cy="10" r="7"/><circle cx="11" cy="21" r="7"/><circle cx="29" cy="21" r="7"/><path d="M18 16h4l1 6q0 9 8 12v2H9v-2q8-3 8-12z"/>']],
  [['Stroke', '<path d="M3 7h34v2H3zM3 16h34v4H3zM3 26h34v6H3z"/>'],
   ['Gradient', '<path d="M4 9h32v22H4z" fill="url(#g1)" stroke="#c4c4c4" stroke-width="2"/>'],
   ['Transparency', '<circle cx="14" cy="14" r="13"/><circle cx="23" cy="24" r="12" fill="#808080" fill-opacity=".8" stroke="#c4c4c4" stroke-width="2"/>']],
  [['Appearance', '<circle cx="20" cy="20" r="12"/><circle cx="20" cy="20" r="16" fill="none" stroke="#c4c4c4" stroke-width="2" stroke-dasharray="4 3"/>'],
   ['Graphic styles', '<path d="M10 5h26v27H20M10 5v14M4 20h9v9H4z" fill="none" stroke="#c4c4c4" stroke-width="2"/><path d="M15 24h5v11H8v-4h7z"/>']],
  [['Layers', '<path d="m20 3 16 11-16 11L4 14zM4 26l4-3 12 8 12-8 4 3-16 11z"/>'],
   ['Asset export', '<path d="M18 6H5v29h29V21" fill="none" stroke="#c4c4c4" stroke-width="4"/><path d="M25 2h14v14h-4V9L27 17l-4-3 8-8h-6z"/>'],
   ['Artboards', '<path d="M12 26H2V3h21v11M11 16h26v20H11z" fill="none" stroke="#c4c4c4" stroke-width="2"/>']],
  [['Comments', '<path d="M6 4h28q3 0 3 3v16q0 3-3 3H20L9 36V26H6q-3 0-3-3V7q0-3 3-3z"/>']],
];
document.getElementById('strip').innerHTML = strip.map(g =>
  '<div class="border-b-2 border-[#383838] pt-1.5 pb-1.5"><svg class="mx-auto mb-[3px] h-[9px] w-[38px]"><use href="#grip"/></svg>' +
  g.map(([label, art]) => `<button aria-label="${label}" class="grid h-14 w-full place-items-center pl-1"><svg class="size-10" viewBox="0 0 40 40" fill="#c4c4c4">${art}</svg></button>`).join('') + '</div>').join('');

const power = (bg, fg, ink) => `<rect width="92" height="92" rx="20" fill="${bg}"/><circle cx="46" cy="46" r="34" fill="${fg}"/><path d="M37 33a16 16 0 1 0 18 0M46 24v26" fill="none" stroke="${ink}" stroke-width="5.500"/>`;
const letters = (bg, fg, t) => `<rect width="92" height="92" rx="20" fill="${bg}"/><text x="46" y="64" text-anchor="middle" font-family="Open Sans" font-weight="600" font-size="54" fill="${fg}">${t}</text>`;
const grad = (id, a, b) => `<defs><linearGradient id="${id}" x2="0" y2="1"><stop stop-color="${a}"/><stop offset="1" stop-color="${b}"/></linearGradient></defs>`;
const pad = [['#5ee04f','#ffc31e','#f98b1c'],['#e0201c','#a9adb5','#fb3f63'],['#a13fd0','#1f9bf5','#35c99d']]
  .map((r, j) => r.map((c, i) => `<rect x="${16 + i * 22}" y="${15 + j * 22.5}" width="17" height="17" rx="4" fill="${c}"/>`).join('')).join('');
const ribbon = '<path d="M44 20c-5 0-5 11 0 22 6 13 16 23 24 23 7 0 7-8-1-9-12-1-27 3-37 9-8 5-12 9-7 9 8-1 18-22 22-36 3-10 4-18-1-18z" fill="none" stroke="#fff" stroke-width="4.500" stroke-linejoin="round"/>';
const dock = [
  ['Finder', grad('f1', '#1ccbff', '#1d6cf2') + grad('f2', '#f6f4f6', '#cfdbe6') + '<rect width="92" height="92" rx="20" fill="url(#f1)"/><path d="M50 0h22q20 0 20 20v52q0 20-20 20H57c-4-16-4-26-4-38H40C40 30 44 12 50 0z" fill="url(#f2)"/><path d="M24 26v9M68 26v9" stroke="#1f3040" stroke-width="4"/><path d="M18 61q28 24 56 0" fill="none" stroke="#101820" stroke-width="3"/>', 1],
  ['Launchpad', '<rect width="92" height="92" rx="20" fill="#bfbcc9"/>' + pad, 0],
  ['Messages', grad('m1', '#5df777', '#15c633') + grad('m2', '#fff', '#bdf0bd') + '<rect width="92" height="92" rx="20" fill="url(#m1)"/><path d="M46 16c20 0 34 12 34 28S66 72 46 72q-5 0-8-1-6 5-14 6 6-5 5-9C18 63 12 54 12 44c0-16 14-28 34-28z" fill="url(#m2)"/>', 0],
  ['Skype', grad('s1', '#0bbcf5', '#0676cf') + '<circle cx="30" cy="28" r="27" fill="#0a93dc"/><circle cx="62" cy="66" r="26" fill="#0569c4"/><circle cx="46" cy="46" r="43" fill="url(#s1)"/><path d="M60 32c-3-10-29-12-29 2 0 14 31 8 31 23 0 15-30 14-32 2" fill="none" stroke="#fff" stroke-width="9" stroke-linecap="round"/>', 0],
  ['Zoom', grad('z1', '#4791ff', '#2a6cf8') + '<rect x="-5" y="-5" width="102" height="102" rx="28" fill="url(#z1)"/><path d="M16 28h34q10 0 10 10v26H26q-10 0-10-10zM62 38l15-10v36L62 54z" fill="#fff"/>', 0],
  ['Tracker', power('#311436', '#b4b2b4', '#321538'), 1],
  ['Miro', '<rect width="92" height="92" rx="20" fill="#ffd02f"/><path d="M17 15h10l16 16-17 46h-9l11-42zM36 15h9l15 13-16 49h-9l12-46zM54 15h9l17 10-17 52h-9l13-49z" fill="#050038"/>', 0],
  ['InDesign', letters('#49021f', '#ff3366', 'Id'), 0],
  ['Photoshop', letters('#001e36', '#31a8ff', 'Ps'), 0],
  ['Illustrator', letters('#330000', '#ff9a00', 'Ai'), 1],
  ['Spotify', '<use href="#spot" x="-1" y="-1" width="94" height="94"/>', 1],
  ['Notion', '<use href="#notion" x="0" y="-2" width="92" height="96"/>', 1],
  ['Mail', grad('ma', '#1f6ff3', '#1ac8fc') + '<rect width="92" height="92" rx="20" fill="url(#ma)"/><rect x="14" y="25" width="64" height="42" rx="4" fill="#ececec"/><path d="m15 66 24-22M77 66 53 44M15 27l25 25q6 5 12 0l25-25" fill="none" stroke="#a8a8a8" stroke-width="2"/>', 1],
  ['Opera', grad('o1', '#ff1b2d', '#a70014') + grad('o2', '#9c0000', '#ff4b4b') + '<circle cx="46" cy="46" r="52" fill="url(#o1)"/><path d="M28 18C45 2 66-4 82 8a52 52 0 0 1 0 76C66 96 45 90 28 74z" fill="url(#o2)"/><ellipse cx="46" cy="46" rx="26" ry="37" fill="#4d0e68"/>', 1],
  ['Acrobat', '<rect width="92" height="92" rx="20" fill="#b30b00"/>' + ribbon, 1],
  null,
  ['Downloads', grad('d1', '#55bdf0', '#1d96d6') + '<path d="M-6 10q0-7 7-7h22q4 0 7 4l5 5h58q7 0 7 7v60H-6z" fill="url(#d1)"/><rect x="-6" y="18" width="106" height="73" rx="7" fill="#5fc9fb"/><path d="M-6 80H100" stroke="#4bb4ea" stroke-width="2"/><circle cx="47" cy="51" r="20" fill="#339fe0"/><path d="M47 40v20M39 53l8 8 8-8" fill="none" stroke="#6fd0fb" stroke-width="3"/>', 0],
  ['Spotify window', '<path d="M-7 16h107v61H-7z" fill="#121212"/><use href="#spot" x="62" y="62" width="36" height="36"/>', 0],
  ['Tracker window', '<path d="M2-7h88V99H2z" fill="#150a1e"/><path d="M2-7h88v28H2z" fill="#24102c"/><g stroke="#5c4a66" stroke-width="2"><path d="M6 3h54M6 10h6M22 19h6M62 19h12M7 28h10M68 28h12M7 37h26M68 38h10M7 50h14M66 50h14M14 58h10M68 60h10M7 71h24M7 84h14M7 94h10"/></g><path d="M10 40h14" stroke="#b06030" stroke-width="2"/><path d="M10 61h28M10 74h28" stroke="#6a4a9a" stroke-width="2"/><path d="M2 24h88M2 46h88M2 81h88" stroke="#2c1a38" stroke-width="2"/><path d="M88 24v20" stroke="#8a7a90" stroke-width="2"/><circle cx="84" cy="3" r="3.500" fill="#e17fd4"/><rect x="62" y="63" width="34" height="34" rx="8" fill="#2a1035"/><circle cx="79" cy="80" r="13" fill="#e17fd4"/><path d="M75 75a6.500 6.500 0 1 0 8 0M79 71v10" fill="none" stroke="#2a1035" stroke-width="2.200"/>', 0],
  ['Notion window', '<path d="M-6 11H100v70H-6z" fill="#191919"/><path d="M-6 11H12v70H-6z" fill="#232323"/><path d="M-4 18h12M-4 24h10M-4 30h12M-4 36h10M-4 44h12M-4 52h10M-4 60h12M-4 68h10M-4 76h12" stroke="#5c5c5c" stroke-width="2"/><path d="M28 26h20" stroke="#bbb" stroke-width="2.500"/><path d="M30 33h12M32 38h14M34 43h12M32 48h24M32 53h14M30 58h28M32 64h20M34 70h24M34 76h20" stroke="#686868" stroke-width="1.500"/><use href="#notion" x="62" y="62" width="36" height="38"/>', 0],
  ['Trash', grad('t1', '#6f6f74', '#a8a8ac') + '<path d="M6 4h80l-8 86q-1 7-12 7H28q-11 0-12-7z" fill="url(#t1)"/><path d="M6 6h80l-2 12q-38 8-76 0z" fill="#8d8d90"/><path d="m10 2 16-9 12 6 12 6 8-11 12 8 12 5-2 7-14 6-20 1-24-2-10-6z" fill="#eee"/><path d="m30 8 10-5 6 7-8 8z" fill="#3aa56a"/><path d="m48 12 12-9 8 8-8 9z" fill="#c0603a"/><path d="m56 1 8 8-5 4z" fill="#3b6fb0"/><path d="m20 4 10 10M38 0l-6 18M70 2l-8 16" stroke="#999" stroke-width="1.500"/><path d="M24 24l4 64M68 24l-4 64" stroke="#b8b8bc" stroke-opacity=".4" stroke-width="5"/>', 0],
];
document.getElementById('dock').innerHTML = dock.map(d => d
  ? `<button aria-label="${d[0]}" class="flex w-[122px] flex-col items-center pt-[19px]"><svg class="size-[92px] overflow-visible" viewBox="0 0 92 92">${d[1]}</svg>${d[2] ? '<span class="mt-[19px] size-2 rounded-full bg-[#b49cc8]"></span>' : ''}</button>`
  : '<span class="mx-7 mt-4 h-[108px] w-0.5 bg-white/30"></span>').join('');
</script>
</body>
</html>
